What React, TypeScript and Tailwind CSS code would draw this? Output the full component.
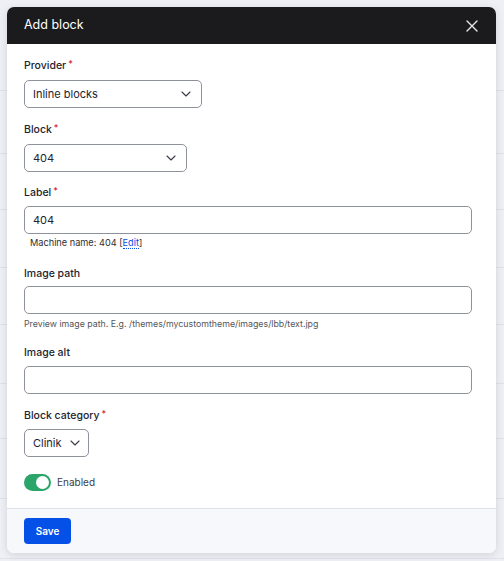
import React from "react";

const BG_ROWS = [91, 63, 56, 58, 57, 59, 55, 60, 60];

function Chevron() {
    return (
        <svg width="10" height="6" viewBox="0 0 10 6" fill="none" className="shrink-0">
            <path d="M1 1l4 4 4-4" stroke="#3b3d45" strokeWidth="1.1" strokeLinecap="round" strokeLinejoin="round" />
        </svg>
    );
}

function Label({ text, required }: { text: string; required?: boolean }) {
    return (
        <div className="flex h-4 items-center text-[10.5px] font-medium leading-4 text-[#222330]">
            {text}
            {required && <span className="ml-[2px] -mt-[5px] text-[9px] text-[#d72222]">*</span>}
        </div>
    );
}

function Select({ value, width }: { value: string; width: string }) {
    return (
        <div
            className={`flex h-[28px] items-center justify-between gap-[8px] rounded-[5px] border border-[#8e929c] bg-white pl-[8px] pr-[10px] text-[11px] text-[#222330] ${width}`}
        >
            <span>{value}</span>
            <Chevron />
        </div>
    );
}

function Input({ value }: { value?: string }) {
    return (
        <div className="flex h-[28px] w-full items-center rounded-[5px] border border-[#8e929c] bg-white px-[8px] text-[11px] text-[#222330]">
            {value}
        </div>
    );
}

export default function App() {
    return (
        <div
            className="relative h-[561px] w-[504px] overflow-hidden bg-[#eef0f5]"
            style={{ fontFamily: "Inter, 'Liberation Sans', sans-serif" }}
        >
            {BG_ROWS.map((h, i) => (
                <div key={i} className="border-b border-[#e0e2e9]" style={{ height: h }} />
            ))}

            <div className="absolute left-[7px] top-[7px] w-[489px] overflow-hidden rounded-[7px] bg-white shadow-[0_2px_8px_rgba(0,0,0,0.12)]">
                <div className="flex h-[37px] items-center justify-between bg-[#1b1b1d] pl-[17px] pr-[18px]">
                    <span className="text-[12.5px] text-white">Add block</span>
                    <svg width="12" height="12" viewBox="0 0 12 12" fill="none">
                        <path d="M1 1l10 10M11 1L1 11" stroke="#e8e8ea" strokeWidth="1.4" strokeLinecap="round" />
                    </svg>
                </div>

                <div className="pb-[17px] pl-[17px] pr-[24px] pt-[14px]">
                    <Label text="Provider" required />
                    <div className="mt-[6px]">
                        <Select value="Inline blocks" width="w-[178px]" />
                    </div>

                    <div className="mt-[14px]">
                        <Label text="Block" required />
                    </div>
                    <div className="mt-[6px]">
                        <Select value="404" width="w-[163px]" />
                    </div>

                    <div className="mt-[13px]">
                        <Label text="Label" required />
                    </div>
                    <div className="mt-[5px]">
                        <Input value="404" />
                    </div>
                    <div className="mt-[3px] pl-[6px] text-[9.2px] leading-3 text-[#2d2e33]">
                        Machine name: 404 [
                        <span className="border-b border-dotted border-[#0550e6] text-[#0550e6]">Edit</span>]
                    </div>

                    <div className="mt-[17px]">
                        <Label text="Image path" />
                    </div>
                    <div className="mt-[4px]">
                        <Input />
                    </div>
                    <div className="mt-[4px] text-[8.8px] leading-3 text-[#55565b]">
                        Preview image path. E.g. /themes/mycustomtheme/images/lbb/text.jpg
                    </div>

                    <div className="mt-[15px]">
                        <Label text="Image alt" />
                    </div>
                    <div className="mt-[5px]">
                        <Input />
                    </div>

                    <div className="mt-[14px]">
                        <Label text="Block category" required />
                    </div>
                    <div className="mt-[5px]">
                        <Select value="Clinik" width="w-[65px]" />
                    </div>

                    <div className="mt-[17px] flex h-[17px] items-center gap-[6px]">
                        <div className="flex h-[17px] w-[27px] items-center justify-end rounded-full bg-[#2ba56a] pr-[2px]">
                            <div className="h-[13px] w-[13px] rounded-full bg-white" />
                        </div>
                        <span className="text-[10px] text-[#3b3c42]">Enabled</span>
                    </div>
                </div>

                <div className="flex h-[45px] items-center border-t border-[#dfe1e7] bg-[#f7f8fc] pl-[17px]">
                    <button className="h-[26px] w-[47px] rounded-[4px] bg-[#0550e6] text-[10px] font-semibold text-white">
                        Save
                    </button>
                </div>
            </div>
        </div>
    );
}
